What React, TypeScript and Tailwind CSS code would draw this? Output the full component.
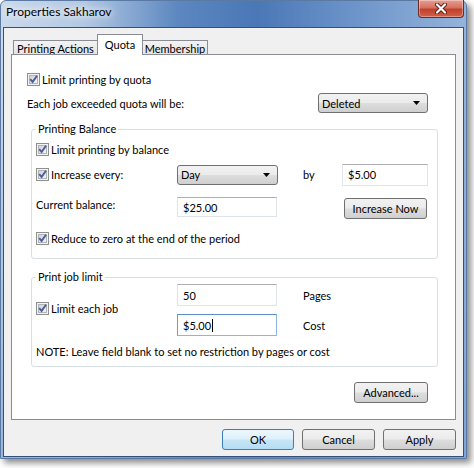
import React from "react";

const btnFace =
  "bg-[linear-gradient(180deg,#f2f2f2_0%,#ebebeb_48%,#dddddd_52%,#cfcfcf_100%)] border border-[#707070] rounded-[3px]";

const CheckBox: React.FC = () => (
  <svg width="13" height="13" viewBox="0 0 13 13" className="shrink-0">
    <defs>
      <linearGradient id="cbFill" x1="0" y1="0" x2="1" y2="1">
        <stop offset="0" stopColor="#cdd0d4" />
        <stop offset="1" stopColor="#f7f7f7" />
      </linearGradient>
    </defs>
    <rect x="0.5" y="0.5" width="12" height="12" fill="#f4f4f4" stroke="#8e8f8f" />
    <rect x="2.5" y="2.5" width="8" height="8" fill="url(#cbFill)" stroke="#b1b3b6" />
    <path d="M3.2 6.2 L5.6 8.9 L10 2.8" fill="none" stroke="#4a5e98" strokeWidth="1.9" />
  </svg>
);

const Check: React.FC<{ label: string }> = ({ label }) => (
  <div className="flex items-center gap-[2px]">
    <CheckBox />
    <span>{label}</span>
  </div>
);

const Arrow: React.FC = () => (
  <svg width="7" height="4" viewBox="0 0 7 4" className="shrink-0">
    <path d="M0 0h7L3.5 4z" fill="#000" />
  </svg>
);

const Select: React.FC<{ value: string; className: string }> = ({ value, className }) => (
  <div className={`${btnFace} ${className} h-[20px] flex items-center justify-between pl-[3px] pr-[7px]`}>
    <span>{value}</span>
    <Arrow />
  </div>
);

const TextBox: React.FC<{ value: string; className: string; focused?: boolean }> = ({
  value,
  className,
  focused,
}) => (
  <div
    className={`${className} bg-white border flex items-center pl-[5px] ${
      focused
        ? "border-[#8ab6e0] border-t-[#5a90c8] border-l-[#6a9fd2]"
        : "border-[#dfe3ea] border-t-[#abadb3] border-l-[#e2e3ea]"
    }`}
  >
    <span>{value}</span>
    {focused && <span className="ml-[1px] w-px h-[13px] bg-black" />}
  </div>
);

const Button: React.FC<{ label: string; className: string; primary?: boolean }> = ({
  label,
  className,
  primary,
}) => (
  <div
    className={`${className} h-[21px] flex items-center justify-center rounded-[3px] border ${
      primary
        ? "border-[#3c7fb1] bg-[linear-gradient(180deg,#edf7fd_0%,#dcf0fb_48%,#c6e6f8_52%,#b6dcf3_100%)]"
        : btnFace
    }`}
  >
    {label}
  </div>
);

const CloseButton: React.FC = () => (
  <div className="-mt-px w-[46px] h-[18px] rounded-b-[4px] border border-t-0 border-[#6b2a22] bg-[linear-gradient(180deg,#e6a093_0%,#d5705f_45%,#c0412d_55%,#d0614a_100%)] flex items-center justify-center shadow-[inset_0_0_0_1px_rgba(255,255,255,0.35)]">
    <svg width="14" height="11" viewBox="0 0 14 11">
      <path d="M3 1.5 L11 9.5 M11 1.5 L3 9.5" stroke="#5a1e16" strokeWidth="4" strokeLinecap="round" />
      <path d="M3 1.5 L11 9.5 M11 1.5 L3 9.5" stroke="#fff" strokeWidth="2.2" strokeLinecap="round" />
    </svg>
  </div>
);

export default function App() {
  return (
    <div className="w-[474px] h-[468px] bg-white font-['Lato',sans-serif] text-[11px] leading-[15px] text-black">
      <div className="w-[467px] h-[459px] flex flex-col px-[2px] pb-px border border-[#5b7aa3] rounded-t-[6px] shadow-[4px_4px_6px_rgba(0,0,0,0.45)] bg-[linear-gradient(180deg,rgba(120,160,215,0)_0px,rgba(120,160,215,0)_40px,rgba(110,152,210,0.55)_100%),linear-gradient(90deg,#cad9ec_0%,#b2c8e3_18%,#5c87c0_38%,#4a77b6_55%,#6b93c9_75%,#95b3da_100%)]">
        {/* title bar */}
        <div className="h-[26px] flex items-start shrink-0">
          <span className="pl-[3px] mt-[3px] text-[12px] leading-[16px] [text-shadow:0_0_6px_#fff,0_0_10px_#fff]">
            Properties Sakharov
          </span>
          <div className="ml-auto">
            <CloseButton />
          </div>
        </div>

        {/* client area */}
        <div className="flex-1 border border-[#34507a] bg-[#f0f0f0] pt-[6px] px-[7px] pb-[6px] flex flex-col">
          {/* tabs */}
          <div className="h-[21px] flex items-end pl-[2px]">
            <div className="w-[84px] h-[15px] border-l border-t border-[#898c95] bg-[linear-gradient(180deg,#f3f3f3,#e3e3e3)] flex items-center justify-center">
              Printing Actions
            </div>
            <div className="relative z-10 w-[46px] h-[21px] border-l border-t border-r border-[#898c95] bg-white flex items-center justify-center pb-[2px]">
              Quota
            </div>
            <div className="w-[65px] h-[15px] border-t border-r border-[#898c95] bg-[linear-gradient(180deg,#f3f3f3,#e3e3e3)] flex items-center justify-center">
              Membership
            </div>
          </div>

          {/* tab page */}
          <div className="-mt-px h-[366px] border border-[#898c95] bg-white flex flex-col pl-[15px] pr-[17px]">
            <div className="mt-[16px] h-[16px] flex items-center">
              <Check label="Limit printing by quota" />
            </div>

            <div className="mt-[6px] h-[20px] flex items-center">
              <span>Each job exceeded quota will be:</span>
              <Select value="Deleted" className="ml-auto mr-[10px] w-[110px]" />
            </div>

            <fieldset className="mt-[9px] ml-[4px] border border-[#d5dfe5] rounded-[3px] pl-[4px] pb-[12px]">
              <legend className="px-[2px] h-[14px] leading-[14px]">Printing Balance</legend>
              <div className="mt-[5px] h-[16px] flex items-center">
                <Check label="Limit printing by balance" />
              </div>
              <div className="mt-[6px] h-[23px] flex items-center">
                <div className="w-[141px]">
                  <Check label="Increase every:" />
                </div>
                <Select value="Day" className="w-[101px]" />
                <span className="w-[64px] pl-[25px]">by</span>
                <TextBox value="$5.00" className="w-[86px] h-[22px]" />
              </div>
              <div className="mt-[11px] h-[21px] flex items-start">
                <span className="w-[141px]">Current balance:</span>
                <TextBox value="$25.00" className="w-[100px] h-[20px]" />
                <Button label="Increase Now" className="ml-[67px] w-[83px] mt-px" />
              </div>
              <div className="mt-[12px] h-[16px] flex items-center">
                <Check label="Reduce to zero at the end of the period" />
              </div>
            </fieldset>

            <fieldset className="mt-[11px] ml-[4px] border border-[#d5dfe5] rounded-[3px] pl-[4px] pb-[7px]">
              <legend className="px-[2px] h-[14px] leading-[14px]">Print job limit</legend>
              <div className="flex">
                <div className="w-[141px] flex items-center pb-[4px]">
                  <Check label="Limit each job" />
                </div>
                <div className="flex flex-col gap-[8px]">
                  <TextBox value="50" className="w-[100px] h-[22px]" />
                  <TextBox value="$5.00" className="w-[100px] h-[22px]" focused />
                </div>
                <div className="flex flex-col gap-[8px] pl-[26px]">
                  <span className="h-[22px] flex items-center">Pages</span>
                  <span className="h-[22px] flex items-center">Cost</span>
                </div>
              </div>
              <div className="mt-[7px] h-[16px] flex items-center">
                NOTE: Leave field blank to set no restriction by pages or cost
              </div>
            </fieldset>

            <Button label="Advanced..." className="mt-[15px] self-end mr-[10px] w-[74px]" />
          </div>

          {/* dialog buttons */}
          <div className="mt-[9px] flex justify-end gap-[8px]">
            <Button label="OK" className="w-[72px]" primary />
            <Button label="Cancel" className="w-[73px]" />
            <Button label="Apply" className="w-[73px]" />
          </div>
        </div>
      </div>
    </div>
  );
}
